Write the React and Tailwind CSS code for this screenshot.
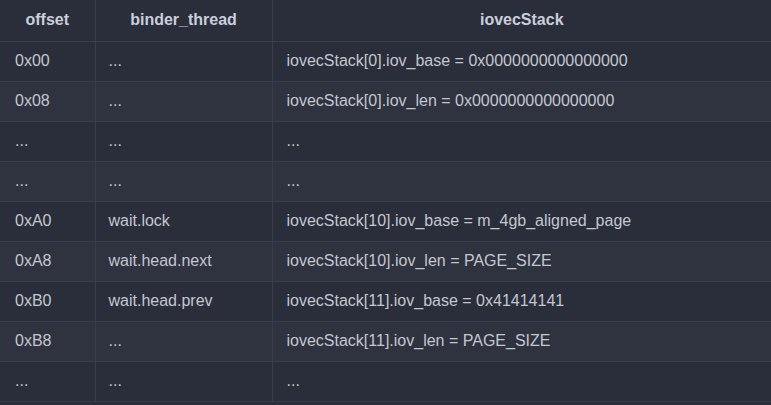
const rows = [
  ["0x00", "...", "iovecStack[0].iov_base = 0x0000000000000000"],
  ["0x08", "...", "iovecStack[0].iov_len = 0x0000000000000000"],
  ["...", "...", "..."],
  ["...", "...", "..."],
  ["0xA0", "wait.lock", "iovecStack[10].iov_base = m_4gb_aligned_page"],
  ["0xA8", "wait.head.next", "iovecStack[10].iov_len = PAGE_SIZE"],
  ["0xB0", "wait.head.prev", "iovecStack[11].iov_base = 0x41414141"],
  ["0xB8", "...", "iovecStack[11].iov_len = PAGE_SIZE"],
  ["...", "...", "..."],
];

export default function App() {
  return (
    <div className="w-[771px] h-[405px] overflow-hidden bg-[#2a2d3a] text-[16px] text-[#c3c7d0]" style={{ fontFamily: '"Liberation Sans", Arial, sans-serif' }}>
      <table className="w-[771px] border-collapse">
        <thead>
          <tr className="h-[41px] bg-[#2a2d3a] font-bold text-[#c9cfdb]">
            <th className="w-[95px] border-r border-b border-[#3a3e4c] text-center">offset</th>
            <th className="w-[177px] border-r border-b border-[#3a3e4c] text-center">binder_thread</th>
            <th className="border-b border-[#3a3e4c] text-center">iovecStack</th>
          </tr>
        </thead>
        <tbody>
          {rows.map((r, i) => (
            <tr key={i} className={`h-[40px] ${i % 2 ? "bg-[#2f323f]" : "bg-[#2a2d3a]"}`}>
              <td className="border-r border-b border-[#3a3e4c] pl-[15px]">{r[0]}</td>
              <td className="border-r border-b border-[#3a3e4c] pl-[13px]">{r[1]}</td>
              <td className="border-b border-[#3a3e4c] pl-[14px]">{r[2]}</td>
            </tr>
          ))}
        </tbody>
      </table>
    </div>
  );
}
